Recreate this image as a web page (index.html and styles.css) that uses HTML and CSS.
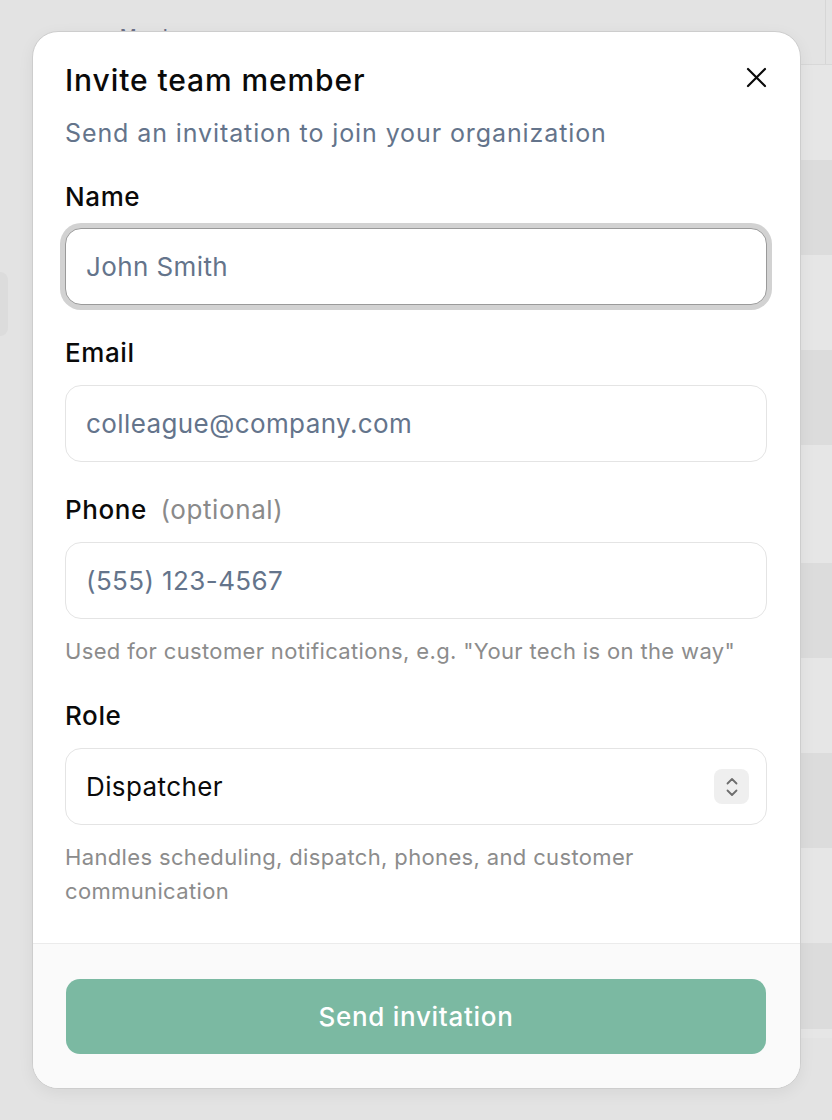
FILE: index.html
```html
<!DOCTYPE html>
<html lang="en">
<head>
<meta charset="utf-8">
<title>Invite team member</title>
<link rel="stylesheet" href="styles.css">
</head>
<body>
<div class="page">
  <div class="side-pill"></div>
  <div class="table">
    <div class="table-head">
      <span class="page-title">Members</span>
      <span class="col-divider"></span>
    </div>
    <div class="row light"></div>
    <div class="row dark"></div>
    <div class="row light"></div>
    <div class="row dark"></div>
    <div class="row light tall"></div>
    <div class="row dark"></div>
    <div class="row light"></div>
    <div class="row dark"></div>
    <div class="row light"></div>
    <div class="row dark short"></div>
    <div class="row light tiny"></div>
  </div>
</div>

<div class="modal" role="dialog" aria-labelledby="dlg-title">
  <div class="modal-body">
    <div class="modal-header">
      <h2 id="dlg-title" class="modal-title">Invite team member</h2>
      <button class="close-btn" aria-label="Close">
        <svg width="21" height="21" viewBox="0 0 21 21" fill="none" stroke="#0a0a0a" stroke-width="2.2" stroke-linecap="round"><path d="M2 2 L19 19 M19 2 L2 19"/></svg>
      </button>
    </div>
    <p class="modal-sub">Send an invitation to join your organization</p>

    <div class="field first">
      <label class="label">Name</label>
      <div class="input focused"><span class="placeholder">John Smith</span></div>
    </div>

    <div class="field">
      <label class="label">Email</label>
      <div class="input"><span class="placeholder">colleague@company.com</span></div>
    </div>

    <div class="field">
      <label class="label">Phone <span class="optional">(optional)</span></label>
      <div class="input"><span class="placeholder">(555) 123-4567</span></div>
      <p class="helper">Used for customer notifications, e.g. "Your tech is on the way"</p>
    </div>

    <div class="field">
      <label class="label">Role</label>
      <div class="input select">
        <span class="value">Dispatcher</span>
        <span class="chevrons">
          <svg width="14" height="22" viewBox="0 0 14 22" fill="none" stroke="#6e6e6e" stroke-width="1.8" stroke-linecap="round" stroke-linejoin="round"><path d="M2.5 7.5 L7 3 L11.5 7.5"/><path d="M2.5 14.5 L7 19 L11.5 14.5"/></svg>
        </span>
      </div>
      <p class="helper">Handles scheduling, dispatch, phones, and customer communication</p>
    </div>
  </div>
  <div class="modal-footer">
    <button class="primary-btn">Send invitation</button>
  </div>
</div>
</body>
</html>
```
FILE: styles.css
```css
* { box-sizing: border-box; }
html, body { margin: 0; padding: 0; }
body {
  width: 832px;
  height: 1120px;
  overflow: hidden;
  background: #e3e3e3;
  font-family: Inter, "Noto Sans", "Liberation Sans", sans-serif;
  color: #0a0a0a;
  position: relative;
}

/* dimmed background page */
.page {
  display: flex;
  width: 832px;
  height: 1120px;
  overflow: hidden;
}
.side-pill {
  width: 8px;
  height: 64px;
  margin-top: 272px;
  border-radius: 0 10px 10px 0;
  background: #dcdcdc;
  flex: none;
}
.table {
  flex: 1;
  min-width: 0;
  margin-left: 112px;
  display: flex;
  flex-direction: column;
}
.table-head {
  height: 65px;
  border-bottom: 1px solid #d8d8d8;
  display: flex;
  align-items: flex-start;
  padding-top: 26px;
  position: relative;
}
.page-title {
  font-size: 18px;
  font-weight: 500;
  color: #6b7088;
}
.col-divider {
  position: absolute;
  left: 705px;
  top: 0;
  width: 1px;
  height: 64px;
  background: #d6d6d6;
}
.row { height: 95px; flex: none; }
.row.light { background: #e6e6e6; }
.row.dark { background: #dcdcdc; }
.row.tall { height: 118px; }
.row.short { height: 86px; }
.row.tiny { height: 9px; }

/* modal */
.modal {
  position: absolute;
  left: 32px;
  top: 31px;
  width: 769px;
  height: 1058px;
  background: #fff;
  border: 1px solid #cdcdcd;
  border-radius: 26px;
  overflow: hidden;
  display: flex;
  flex-direction: column;
  box-shadow: 0 4px 16px rgba(0,0,0,0.06);
}
.modal-body {
  padding: 29px 33px 34px 32px;
  flex: 1;
  display: flex;
  flex-direction: column;
}
.modal-header {
  display: flex;
  justify-content: space-between;
  align-items: flex-start;
}
.modal-title {
  margin: 0;
  font-size: 30px;
  line-height: 38px;
  font-weight: 500;
  letter-spacing: 0.9px;
}
.close-btn {
  border: 0;
  background: none;
  padding: 0;
  margin-top: 6px;
  width: 21px;
  height: 21px;
  display: flex;
}
.modal-sub {
  margin: 18px 0 0;
  font-size: 25px;
  line-height: 32px;
  letter-spacing: 0.9px;
  color: #64748b;
}
.field {
  margin-top: 32px;
  display: flex;
  flex-direction: column;
}
.field.first { margin-top: 32px; }
.label {
  font-size: 26px;
  line-height: 32px;
  font-weight: 500;
  letter-spacing: 0.6px;
  color: #0a0a0a;
}
.optional {
  font-weight: 400;
  color: #8a8a8a;
  margin-left: 6px;
}
.input {
  margin-top: 16px;
  height: 77px;
  border: 1.5px solid #e4e4e4;
  border-radius: 16px;
  padding: 0 20px;
  display: flex;
  align-items: center;
  font-size: 26px;
  letter-spacing: 0.4px;
  background: #fff;
}
.input.focused {
  border-color: #9a9a9a;
  box-shadow: 0 0 0 5px #d2d2d2;
}
.field.first .input { margin-top: 15px; }
.placeholder { color: #64748b; }
.value { color: #0a0a0a; }
.select {
  justify-content: space-between;
  padding-right: 17px;
}
.chevrons {
  width: 35px;
  height: 35px;
  border-radius: 8px;
  background: #efefef;
  display: flex;
  align-items: center;
  justify-content: center;
}
.helper {
  margin: 15px 0 0;
  font-size: 22px;
  line-height: 34px;
  letter-spacing: 0.35px;
  color: #8c8c8c;
}
.modal-footer {
  flex: none;
  background: #fafafa;
  border-top: 1px solid #ebebeb;
  padding: 35px 34px 34px 33px;
}
.primary-btn {
  width: 100%;
  height: 75px;
  border: 0;
  border-radius: 14px;
  background: #7bb9a2;
  color: #fff;
  font-family: inherit;
  font-size: 26px;
  font-weight: 500;
  letter-spacing: 0.7px;
}
```
